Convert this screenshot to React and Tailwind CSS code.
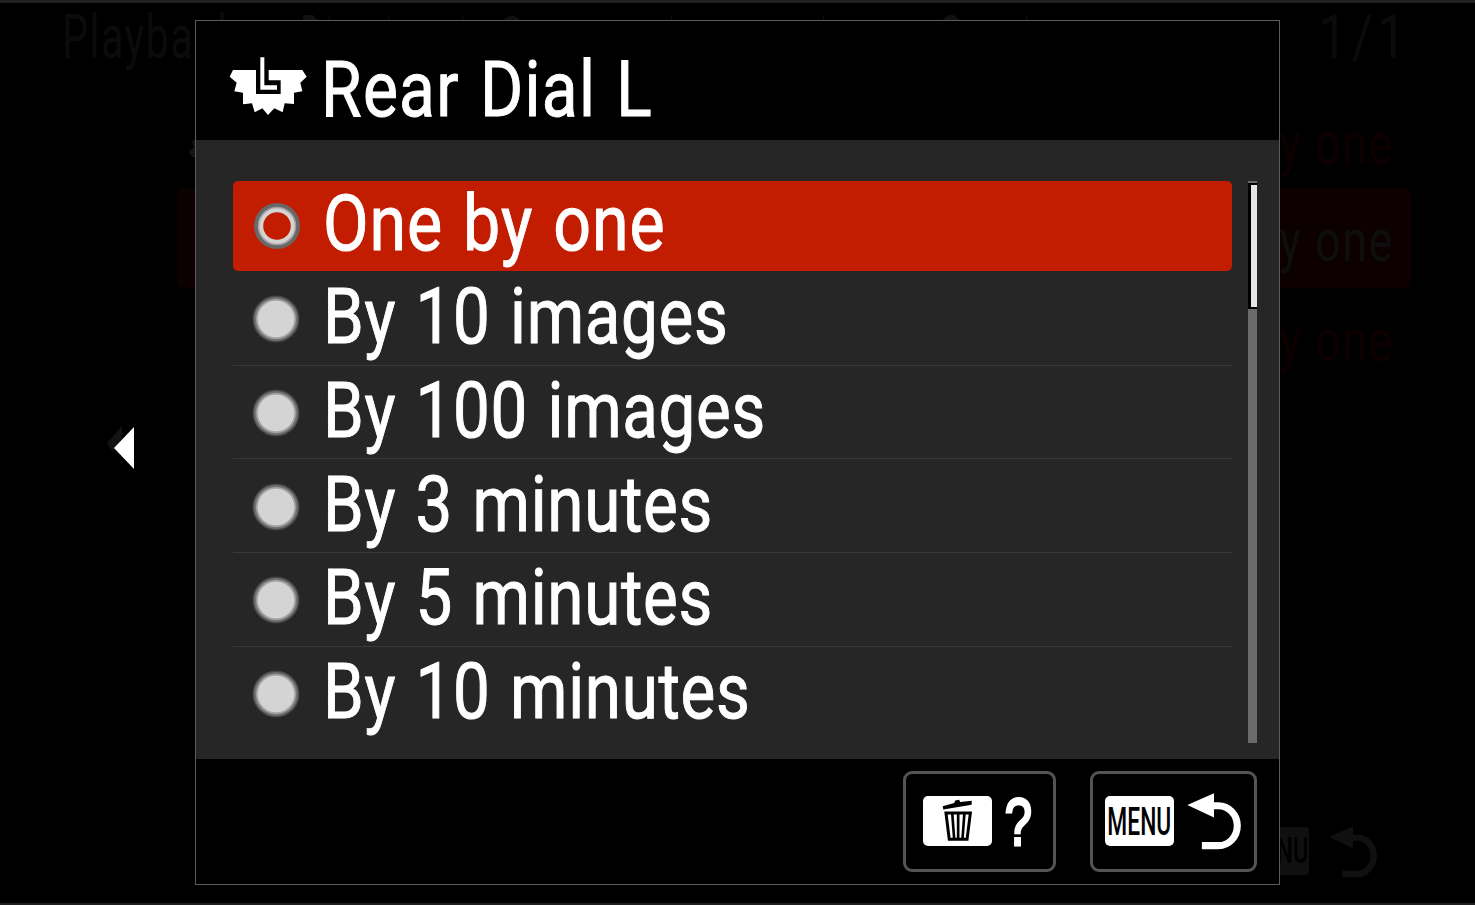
import React from "react";

const OPTIONS = [
  "One by one",
  "By 10 images",
  "By 100 images",
  "By 3 minutes",
  "By 5 minutes",
  "By 10 minutes",
];

function ReturnArrow({ className }) {
  return (
    <svg viewBox="892 99 160 170" preserveAspectRatio="none" className={className}>
      <path d="M893 135 972 100V172Z" fill="currentColor" />
      <path d="M970 137H985A56 59.5 0 0 1 985 256H936" fill="none" stroke="currentColor" strokeWidth="21" />
    </svg>
  );
}

function DialIcon() {
  return (
    <svg viewBox="115 135 240 180" className="h-[60px] w-20 shrink-0 text-white">
      <path
        fill="currentColor"
        d="M130 177H199V249H273V208H237V177H338L351 197 332 215 338 241 313 245V279L285 277 279 304 254 292 235 312 218 292 195 304 187 277 160 280V245L134 241 141 215 120 197Z"
      />
      <path fill="currentColor" d="M212 139H224V223H262V236H212Z" />
    </svg>
  );
}

function TrashIcon() {
  return (
    <svg viewBox="155 120 94 128" className="h-[43px] w-[31px] text-black">
      <path fill="currentColor" d="M157 141 192 131 195 123 207 121 210 128 245 124V136L159 151Z" />
      <path fill="none" stroke="currentColor" strokeWidth="9" d="M167 161H241L231 241H177Z" />
      <path fill="none" stroke="currentColor" strokeWidth="8" d="M186 161 192 241M204 161V241M223 161 217 241" />
    </svg>
  );
}

function Radio({ selected }) {
  return selected ? (
    <svg viewBox="0 0 48 48" className="size-12 shrink-0">
      <circle cx="24" cy="24" r="20.5" fill="none" stroke="#686868" strokeWidth="5" />
      <circle cx="24" cy="24" r="18.3" fill="none" stroke="#a2a2a2" strokeWidth="2" />
      <circle cx="24" cy="24" r="15.8" fill="none" stroke="#d4d4d4" strokeWidth="4" />
    </svg>
  ) : (
    <svg viewBox="0 0 48 48" className="size-12 shrink-0">
      <circle cx="24" cy="24" r="23.5" fill="#484848" />
      <circle cx="24" cy="24" r="22" fill="#737373" />
      <circle cx="24" cy="24" r="20" fill="#a5a5a5" />
      <circle cx="24" cy="24" r="18.3" fill="#d4d4d4" />
    </svg>
  );
}

function Label({ className, children }) {
  return (
    <span
      className={
        "block origin-left whitespace-nowrap text-[78px] leading-[90px] text-white [-webkit-text-stroke:1px_white] [word-spacing:3px] " +
        className
      }
    >
      {children}
    </span>
  );
}

function GhostValue() {
  return <span className="inline-block origin-right scale-x-[0.75] tracking-[2px]">One by one</span>;
}

function Ghost() {
  return (
    <div className="absolute inset-0 overflow-hidden border-t-[3px] border-b-2 border-[#202020]">
      <div className="flex h-[92px] items-start justify-between pr-[64px] pl-[62px] pt-[1px] text-[61px] leading-[66px] text-[#0b0b0b]">
        <span className="origin-left scale-x-[0.68] tracking-[2px]">Playback</span>
        <span className="origin-right scale-x-[0.85] tracking-[5px]">1/1</span>
      </div>
      <svg viewBox="0 0 760 6" className="absolute top-[12px] left-[300px] h-[6px] w-[760px] text-[#101010]">
        <path
          fill="currentColor"
          d="M3 0H13L18 6H3ZM29 0H30V6H29ZM88 0H89V6H88ZM162 0H163V6H162ZM203 6Q212-5 220 6ZM371 0H372V6H371ZM523 0H524V6H523ZM642 6Q651-7 660 6ZM726 0H727V6H726Z"
        />
      </svg>
      <div className="mr-16 ml-[177px] text-right text-[60px] leading-[98px] text-[#0e0000]">
        <div className="h-[93px] pr-[17px]"><GhostValue /></div>
        <div className="h-[100px] rounded-md bg-[#0c0000] pt-[4px] pr-[17px] text-[#0e0e0e]"><GhostValue /></div>
        <div className="h-[100px] pt-[4px] pr-[17px]"><GhostValue /></div>
      </div>
      <svg viewBox="0 0 6 20" className="absolute top-[134px] left-[189px] h-5 w-[6px] text-[#161616]">
        <path fill="currentColor" d="M6 2 3 5 5 10 0 15 3 20H6Z" />
      </svg>
      <svg viewBox="0 0 17 26" className="absolute top-[423px] left-[107px] h-[26px] w-[17px] text-[#131313]">
        <path fill="currentColor" d="M0 17 15 0V12L6 26Z" />
      </svg>
      <div className="absolute top-[824px] left-[1241px] flex items-start gap-5 text-[#101010]">
        <div className="flex h-12 w-[68px] items-center justify-center overflow-hidden rounded bg-[#101010] text-[36px] font-medium text-black">
          <span className="scale-x-[0.65]">MENU</span>
        </div>
        <ReturnArrow className="mt-[-1px] h-[52px] w-[48px]" />
      </div>
    </div>
  );
}

export default function App() {
  return (
    <main className="relative flex h-[905px] w-[1475px] overflow-hidden bg-black font-['Roboto',sans-serif]">
      <Ghost />
      <div className="relative flex w-[195px] shrink-0 justify-end pt-[427px] pr-[61px]">
        <svg viewBox="0 0 20 42" className="h-[42px] w-5">
          <path fill="#fff" d="M0 21 20 0V42Z" />
        </svg>
      </div>
      <section className="relative mt-5 flex h-[865px] w-[1085px] flex-col border-[1.5px] border-[#5c5c5c] bg-black">
        <header className="flex h-[119px] shrink-0 items-start pl-8">
          <div className="pt-[35px]"><DialIcon /></div>
          <h1 className="ml-[13px] pt-[24px]"><Label className="scale-x-[0.845] tracking-[1.5px]">Rear Dial L</Label></h1>
        </header>
        <div className="flex h-[619px] shrink-0 bg-[#262626] pt-[41px] pl-[37px]">
          <ul className="w-[999px]">
            {OPTIONS.map((option, i) => (
              <li
                key={option}
                className={
                  i === 0
                    ? "mb-[1px] flex h-[90px] items-center rounded-[5px] bg-[#c21d00] pl-5"
                    : "flex h-[93.7px] items-center border-b-[1.5px] border-[#393939] pt-[2px] pl-[19px] last:border-transparent"
                }
              >
                <Radio selected={i === 0} />
                <div className={i === 0 ? "mb-[4px] ml-[22px]" : "mb-[4px] ml-[23px]"}>
                  <Label className={i === 0 ? "scale-x-[0.85] tracking-[1.1px]" : "scale-x-[0.84] tracking-[0.8px]"}>
                    {option}
                  </Label>
                </div>
              </li>
            ))}
          </ul>
          <div className="ml-4 h-[562px] w-[9px] bg-[#6b6b69]">
            <div className="mt-[2px] h-[126px] w-[9px] border-y-2 border-l-[3px] border-black bg-[#e6e6e6]" />
          </div>
        </div>
        <footer className="flex items-start justify-end gap-[34px] pt-[12px] pr-[22px]">
          <button className="flex h-[101px] w-[153px] items-center rounded-[9px] border-[3px] border-[#545454] pl-[17px]">
            <span className="mb-[2px] flex h-[50px] w-[69px] items-center justify-center rounded-[5px] bg-white"><TrashIcon /></span>
            <span className="ml-[8px] scale-x-[0.74] font-['Liberation_Sans',sans-serif] text-[66px] leading-[90px] text-white [-webkit-text-stroke:3px_white]">?</span>
          </button>
          <button className="flex h-[101px] w-[167px] items-center rounded-[9px] border-[3px] border-[#545454] pl-3">
            <span className="mb-[2px] flex h-[50px] w-[69px] items-center justify-center rounded-[5px] bg-white text-[38px] font-medium text-black">
              <span className="mt-[3px] scale-x-[0.6]">MENU</span>
            </span>
            <ReturnArrow className="ml-[13px] h-[57px] w-[54px] text-white" />
          </button>
        </footer>
      </section>
    </main>
  );
}
